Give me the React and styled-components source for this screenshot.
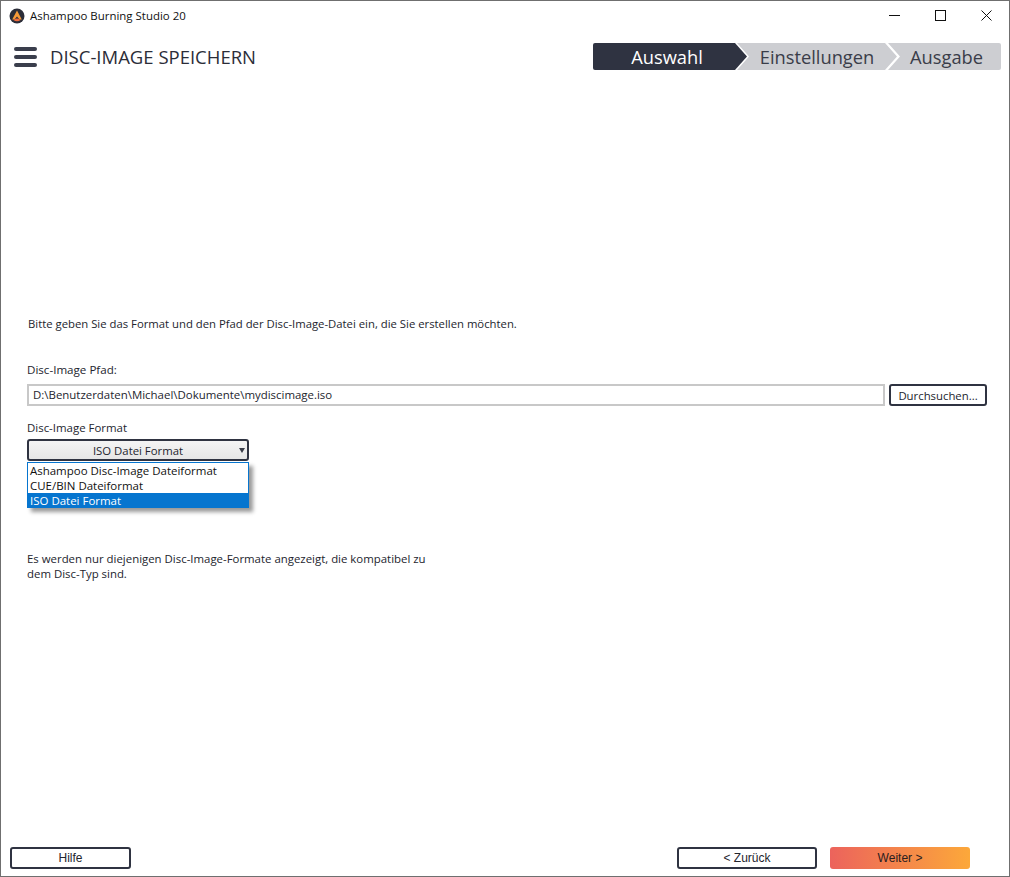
import React from 'react'
import styled, { createGlobalStyle } from 'styled-components'

const GlobalStyle = createGlobalStyle`
    html, body { margin: 0; padding: 0; background: #fff; }
    * { box-sizing: border-box; }
`

function Logo() {
    return (
        <svg width="16" height="16" viewBox="0 0 16 16">
            <circle cx="8" cy="8" r="7.5" fill="#2b2d38" />
            <path d="M8 2.6 L12.8 11.4 L10.6 11.4 L8 8.6 L5.4 11.4 L3.2 11.4 Z" fill="#f59a38" />
            <path d="M4.4 12 Q8 9.2 11.6 12 Q8 14.4 4.4 12 Z" fill="#ee6a3c" />
        </svg>
    )
}

function App() {
    return (
        <Window>
            <GlobalStyle />
            <TitleBar>
                <TitleLeft>
                    <Logo />
                    <TitleText>Ashampoo Burning Studio 20</TitleText>
                </TitleLeft>
                <WinButtons>
                    <WinButton>
                        <svg width="11" height="11" viewBox="0 0 11 11"><path d="M0 5.5H11" stroke="#111" strokeWidth="1" /></svg>
                    </WinButton>
                    <WinButton>
                        <svg width="11" height="11" viewBox="0 0 11 11"><rect x="0.5" y="0.5" width="10" height="10" fill="none" stroke="#111" /></svg>
                    </WinButton>
                    <WinButton>
                        <svg width="11" height="11" viewBox="0 0 11 11"><path d="M0.5 0.5L10.5 10.5M10.5 0.5L0.5 10.5" stroke="#111" strokeWidth="1" /></svg>
                    </WinButton>
                </WinButtons>
            </TitleBar>

            <Header>
                <HeaderLeft>
                    <Hamburger>
                        <span /><span /><span />
                    </Hamburger>
                    <PageTitle>DISC-IMAGE SPEICHERN</PageTitle>
                </HeaderLeft>
                <Steps>
                    <Step $active $first $w={154} $pl={6} $pr={12}>Auswahl</Step>
                    <Step $overlap={10} $w={160} $pl={12} $pr={12}>Einstellungen</Step>
                    <Step $last $overlap={9} $w={113} $pl={12} $pr={8}>Ausgabe</Step>
                </Steps>
            </Header>

            <Content>
                <Intro>Bitte geben Sie das Format und den Pfad der Disc-Image-Datei ein, die Sie erstellen möchten.</Intro>
                <PathLabel>Disc-Image Pfad:</PathLabel>
                <PathRow>
                    <PathInput>D:\Benutzerdaten\Michael\Dokumente\mydiscimage.iso</PathInput>
                    <BrowseButton>Durchsuchen...</BrowseButton>
                </PathRow>
                <FormatLabel>Disc-Image Format</FormatLabel>
                <Combo>
                    <ComboButton>
                        ISO Datei Format
                        <ComboArrow />
                    </ComboButton>
                    <ComboList>
                        <ComboItem>Ashampoo Disc-Image Dateiformat</ComboItem>
                        <ComboItem>CUE/BIN Dateiformat</ComboItem>
                        <ComboItem $selected>ISO Datei Format</ComboItem>
                    </ComboList>
                </Combo>
                <Note>Es werden nur diejenigen Disc-Image-Formate angezeigt, die kompatibel zu dem Disc-Typ sind.</Note>
            </Content>

            <Footer>
                <FooterButton $w={121}>Hilfe</FooterButton>
                <FooterRight>
                    <FooterButton $w={140}>&lt; Zurück</FooterButton>
                    <NextButton>Weiter &gt;</NextButton>
                </FooterRight>
            </Footer>
        </Window>
    )
}

export default App

const Window = styled.div`
    width: 1010px;
    height: 877px;
    display: flex;
    flex-direction: column;
    background: #fff;
    border: 1px solid #6f6f6f;
    font-family: "Open Sans", "Noto Sans", sans-serif;
    color: #23252e;
    overflow: hidden;
`
const TitleBar = styled.div`
    height: 29px;
    flex: none;
    display: flex;
    align-items: center;
    justify-content: space-between;
    padding-left: 8px;
`
const TitleLeft = styled.div`
    display: flex;
    align-items: center;
    gap: 5px;
`
const TitleText = styled.span`
    font-size: 11.45px;
    color: #111;
`
const WinButtons = styled.div`
    display: flex;
`
const WinButton = styled.div`
    width: 46px;
    height: 29px;
    display: flex;
    align-items: center;
    justify-content: center;
`
const Header = styled.div`
    height: 27px;
    margin-top: 13px;
    flex: none;
    display: flex;
    justify-content: space-between;
    padding: 0 8px 0 13px;
`
const HeaderLeft = styled.div`
    display: flex;
    align-items: center;
    gap: 13px;
`
const Hamburger = styled.div`
    width: 23px;
    display: flex;
    flex-direction: column;
    gap: 4px;

    span {
        display: block;
        height: 4px;
        border-radius: 2px;
        background: #3a3e4c;
    }
`
const PageTitle = styled.div`
    font-size: 18.5px;
    color: #2b2d38;
`
const Steps = styled.div`
    display: flex;
`
const Step = styled.div`
    width: ${p => p.$w}px;
    height: 27px;
    margin-left: ${p => -(p.$overlap || 0)}px;
    display: flex;
    align-items: center;
    justify-content: center;
    padding-left: ${p => p.$pl}px;
    padding-right: ${p => p.$pr}px;
    padding-bottom: 1px;
    font-size: 18.3px;
    background: ${p => (p.$active ? '#2f3341' : '#cdced2')};
    color: ${p => (p.$active ? '#fff' : '#3a3d49')};
    border-radius: ${p => (p.$first ? '2px 0 0 2px' : p.$last ? '0 2px 2px 0' : '0')};
    clip-path: ${p =>
        p.$first
            ? 'polygon(0 0, calc(100% - 12px) 0, 100% 50%, calc(100% - 12px) 100%, 0 100%)'
            : p.$last
              ? 'polygon(0 0, 100% 0, 100% 100%, 0 100%, 12px 50%)'
              : 'polygon(0 0, calc(100% - 12px) 0, 100% 50%, calc(100% - 12px) 100%, 0 100%, 12px 50%)'};
`
const Content = styled.div`
    flex: 1;
    display: flex;
    flex-direction: column;
    padding: 246px 22px 0 26px;
    font-size: 11.35px;
`
const Intro = styled.div`
    height: 16px;
    line-height: 16px;
    margin-left: 1px;
    font-size: 11.32px;
`
const PathLabel = styled.div`
    height: 16px;
    line-height: 16px;
    margin-top: 30px;
    font-size: 11.6px;
`
const PathRow = styled.div`
    display: flex;
    gap: 4px;
    margin-top: 6px;
`
const PathInput = styled.div`
    flex: 1;
    height: 22px;
    line-height: 18px;
    border: 2px solid #c8c8c8;
    padding-left: 4px;
    font-size: 11.45px;
`
const BrowseButton = styled.div`
    width: 98px;
    height: 22px;
    border: 2px solid #2f3341;
    border-radius: 3px;
    display: flex;
    align-items: center;
    justify-content: center;
    background: #fff;
`
const FormatLabel = styled.div`
    height: 16px;
    line-height: 16px;
    margin-top: 14px;
    font-size: 11.45px;
`
const Combo = styled.div`
    position: relative;
    width: 222px;
    margin-top: 3px;
`
const ComboButton = styled.div`
    height: 22px;
    border: 2px solid #2f3341;
    border-radius: 3px;
    background: linear-gradient(#f4f4f4, #e6e6e6);
    display: flex;
    align-items: center;
    justify-content: center;
`
const ComboArrow = styled.span`
    position: absolute;
    right: 4px;
    top: 9px;
    border-left: 3.5px solid transparent;
    border-right: 3.5px solid transparent;
    border-top: 5px solid #3a3d49;
`
const ComboList = styled.div`
    position: absolute;
    left: 0;
    top: 23px;
    width: 222px;
    border: 1px solid #0675cf;
    border-bottom: none;
    background: #fff;
    box-shadow: 4px 4px 4px rgba(0, 0, 0, 0.4);
    z-index: 2;
    font-size: 11.48px;
`
const ComboItem = styled.div`
    height: 15px;
    line-height: 15px;
    padding-left: 2px;
    white-space: nowrap;
    color: ${p => (p.$selected ? '#fff' : '#111')};
    background: ${p => (p.$selected ? '#0675cf' : 'transparent')};
`
const Note = styled.div`
    width: 410px;
    line-height: 15px;
    margin-top: 90px;
    font-size: 11.42px;
`
const Footer = styled.div`
    flex: none;
    height: 22px;
    margin-bottom: 7px;
    display: flex;
    justify-content: space-between;
    padding: 0 39px 0 9px;
    font-family: "Liberation Sans", Arial, sans-serif;
    font-size: 12px;
`
const FooterRight = styled.div`
    display: flex;
    gap: 13px;
`
const FooterButton = styled.div`
    width: ${p => p.$w}px;
    height: 22px;
    border: 2px solid #2f3341;
    border-radius: 3px;
    display: flex;
    align-items: center;
    justify-content: center;
    background: #fff;
`
const NextButton = styled.div`
    width: 140px;
    height: 22px;
    border-radius: 3px;
    display: flex;
    align-items: center;
    justify-content: center;
    color: #2a2020;
    background: linear-gradient(90deg, #ec635c, #fca83a);
`
